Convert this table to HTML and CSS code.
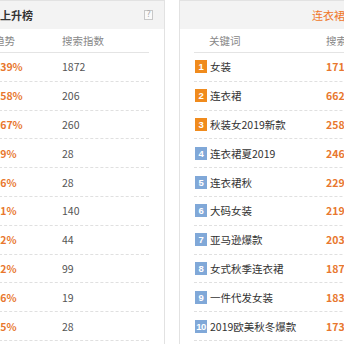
FILE: index.html
```html
<!DOCTYPE html>
<html lang="zh-CN">
<head>
<meta charset="utf-8">
<title>搜索排行</title>
<link rel="stylesheet" href="styles.css">
</head>
<body>
<div class="wrap">
  <section class="panel panel-left">
    <div class="panel-head">
      <h2 class="title">搜索上升榜</h2>
      <span class="help">?</span>
    </div>
    <div class="table table-left">
      <div class="row row-head"><span class="c-trend">趋势</span><span class="c-index">搜索指数</span></div>
      <div class="row"><span class="c-trend up">439%</span><span class="c-index">1872</span></div>
      <div class="row"><span class="c-trend up">358%</span><span class="c-index">206</span></div>
      <div class="row"><span class="c-trend up">267%</span><span class="c-index">260</span></div>
      <div class="row"><span class="c-trend up">99%</span><span class="c-index">28</span></div>
      <div class="row"><span class="c-trend up">86%</span><span class="c-index">28</span></div>
      <div class="row"><span class="c-trend up">71%</span><span class="c-index">140</span></div>
      <div class="row"><span class="c-trend up">62%</span><span class="c-index">44</span></div>
      <div class="row"><span class="c-trend up">52%</span><span class="c-index">99</span></div>
      <div class="row"><span class="c-trend up">46%</span><span class="c-index">19</span></div>
      <div class="row"><span class="c-trend up">35%</span><span class="c-index">28</span></div>
    </div>
  </section>
  <section class="panel panel-right">
    <div class="panel-head head-right">
      <span class="tab active">连衣裙</span>
    </div>
    <div class="table table-right">
      <div class="row row-head"><span class="c-kw head-kw">关键词</span><span class="c-val">搜索指数</span></div>
      <div class="row"><span class="c-kw"><i class="badge hot">1</i>女装</span><span class="c-val num">171843</span></div>
      <div class="row"><span class="c-kw"><i class="badge hot">2</i>连衣裙</span><span class="c-val num">66215</span></div>
      <div class="row"><span class="c-kw"><i class="badge hot">3</i>秋装女2019新款</span><span class="c-val num">25862</span></div>
      <div class="row"><span class="c-kw"><i class="badge">4</i>连衣裙夏2019</span><span class="c-val num">24671</span></div>
      <div class="row"><span class="c-kw"><i class="badge">5</i>连衣裙秋</span><span class="c-val num">22935</span></div>
      <div class="row"><span class="c-kw"><i class="badge">6</i>大码女装</span><span class="c-val num">21954</span></div>
      <div class="row"><span class="c-kw"><i class="badge">7</i>亚马逊爆款</span><span class="c-val num">20388</span></div>
      <div class="row"><span class="c-kw"><i class="badge">8</i>女式秋季连衣裙</span><span class="c-val num">18742</span></div>
      <div class="row"><span class="c-kw"><i class="badge">9</i>一件代发女装</span><span class="c-val num">18316</span></div>
      <div class="row"><span class="c-kw"><i class="badge">10</i>2019欧美秋冬爆款</span><span class="c-val num">17369</span></div>
    </div>
  </section>
</div>
</body>
</html>
```

FILE: styles.css
```css
html, body {
  margin: 0;
  padding: 0;
  background: #fff;
}
body {
  width: 344px;
  height: 344px;
  overflow: hidden;
  font-family: "Noto Sans CJK SC", "Microsoft YaHei", sans-serif;
  font-size: 10.5px;
  color: #333;
}
.wrap {
  display: flex;
  align-items: flex-start;
}
.panel {
  flex: none;
  box-sizing: border-box;
  border: 1px solid #e2e2e2;
  background: #fff;
  height: 360px;
}
.panel-left {
  width: 201px;
  margin-left: -36px;
}
.panel-right {
  width: 320px;
  margin-left: 14px;
}
.panel-head {
  height: 28px;
  background: #f3f3f3;
  display: flex;
  align-items: center;
  justify-content: space-between;
  padding: 0 11px 0 13px;
}
.title {
  margin: 0;
  font-size: 11px;
  font-weight: bold;
  color: #333;
}
.help {
  box-sizing: border-box;
  width: 9px;
  height: 10px;
  border: 1px solid #c8c8c8;
  background: #fafafa;
  color: #aaa;
  font-size: 8px;
  line-height: 8px;
  text-align: center;
  font-family: "DejaVu Sans", sans-serif;
}
.head-right {
  justify-content: flex-start;
  padding-left: 132px;
}
.tab {
  font-size: 11px;
}
.tab.active {
  color: #f0782a;
}
.table-left {
  padding: 0 15px 0 29px;
}
.table-right {
  padding: 0 0 0 14px;
}
.row {
  display: flex;
  align-items: center;
  height: 27.8px;
  border-bottom: 1px dashed #e0e0e0;
  white-space: nowrap;
}
.row-head {
  height: 23px;
  border-bottom: 1px solid #e4e4e4;
  color: #888;
}
.c-trend {
  width: 68px;
  flex: none;
}
.up {
  color: #e8772e;
  font-weight: bold;
}
.c-index {
  color: #555;
}
.row-head .c-index {
  color: #888;
}
.c-kw {
  width: 132px;
  flex: none;
  display: flex;
  align-items: center;
  padding-left: 1px;
  box-sizing: border-box;
  color: #333;
}
.head-kw {
  padding-left: 15px;
  color: #888;
}
.c-val {
  color: #888;
}
.num {
  color: #e8772e;
  font-weight: bold;
}
.badge {
  flex: none;
  width: 12px;
  height: 13px;
  margin-right: 3px;
  background: #80a8d8;
  color: #fff;
  font-style: normal;
  font-weight: bold;
  font-size: 9.5px;
  line-height: 13px;
  text-align: center;
  letter-spacing: -0.5px;
  font-family: "Liberation Sans", sans-serif;
}
.badge.hot {
  background: #f08b1d;
}
```
